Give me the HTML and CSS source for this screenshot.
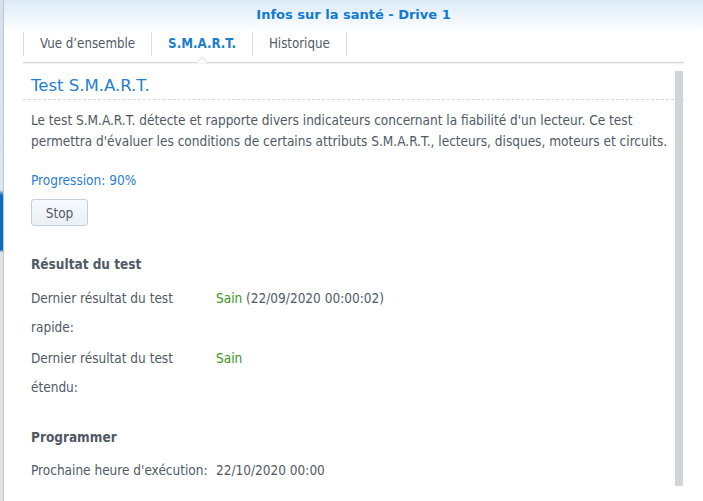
FILE: index.html
```html
<!DOCTYPE html>
<html lang="fr">
<head>
    <meta charset="UTF-8">
    <title>Infos sur la santé - Drive 1</title>
    <link rel="stylesheet" href="styles.css">
</head>
<body>
    <div class="desk-edge"></div>
    <div class="window">
        <div class="title-bar">Infos sur la santé - Drive 1</div>

        <!-- Tabs -->
        <div class="tab-bar">
            <div class="tab">Vue d’ensemble</div>
            <div class="tab active">S.M.A.R.T.</div>
            <div class="tab">Historique</div>
            <div class="tab tab-end"></div>
        </div>

        <div class="panel">
            <div class="scrollbar"></div>
            <h2 class="section-title">Test S.M.A.R.T.</h2>
            <div class="panel-body">
                <p class="desc">Le test S.M.A.R.T. détecte et rapporte divers indicateurs concernant la fiabilité d'un lecteur. Ce test permettra d'évaluer les conditions de certains attributs S.M.A.R.T., lecteurs, disques, moteurs et circuits.</p>
                <p class="progress">Progression: 90%</p>
                <button class="btn" type="button">Stop</button>

                <h3 class="group-title">Résultat du test</h3>
                <div class="field">
                    <div class="field-label">Dernier résultat du test rapide:</div>
                    <div class="field-value"><span class="ok">Sain</span> (22/09/2020 00:00:02)</div>
                </div>
                <div class="field">
                    <div class="field-label">Dernier résultat du test étendu:</div>
                    <div class="field-value"><span class="ok">Sain</span></div>
                </div>

                <h3 class="group-title schedule">Programmer</h3>
                <div class="field">
                    <div class="field-label">Prochaine heure d'exécution:</div>
                    <div class="field-value">22/10/2020 00:00</div>
                </div>
            </div>
        </div>
    </div>
</body>
</html>
```

FILE: styles.css
```css
body {
    margin: 0;
    display: flex;
    height: 501px;
    overflow: hidden;
    font-family: "DejaVu Sans Condensed", "DejaVu Sans", sans-serif;
    font-size: 13.5px;
    color: #4f5a65;
}

/* strip of the desktop behind the window */
.desk-edge {
    width: 3px;
    flex-shrink: 0;
    border-right: 1px solid #c3c7cc;
    background: linear-gradient(to bottom, #d4e0ec 0, #dfe6ee 190px, #0b6cc3 195px, #0b6cc3 250px, #e2e2e2 252px, #e2e2e2 100%);
}

.window {
    flex: 1;
    background-color: #ffffff;
}

.title-bar {
    height: 32px;
    line-height: 30px;
    text-align: center;
    font-family: "DejaVu Sans", sans-serif;
    font-size: 13px;
    font-weight: bold;
    color: #0f7bd2;
    background: linear-gradient(to bottom, #dbeaf8, #ffffff);
}

/* Tabs */
.tab-bar {
    display: flex;
    margin: 0 19px 0 19px;
    padding-bottom: 6px;
    border-bottom: 1px solid #d6dade;
    box-shadow: 0 1px 1px rgba(0, 0, 0, 0.05);
    position: relative;
}

.tab {
    height: 24px;
    line-height: 24px;
    padding: 0 16px;
    font-size: 13.2px;
    border-left: 1px solid #d7dde3;
    color: #4f5a65;
}

.tab.active {
    font-weight: bold;
    color: #1a7dd0;
    position: relative;
}

/* little notch under the active tab */
.tab.active::after {
    content: "";
    position: absolute;
    left: 50%;
    bottom: -7px;
    margin-left: -6px;
    width: 0;
    height: 0;
    border-left: 6px solid transparent;
    border-right: 6px solid transparent;
    border-bottom: 6px solid #d6dade;
}

.tab.active::before {
    content: "";
    position: absolute;
    left: 50%;
    bottom: -7px;
    margin-left: -5px;
    width: 0;
    height: 0;
    border-left: 5px solid transparent;
    border-right: 5px solid transparent;
    border-bottom: 5px solid #ffffff;
    z-index: 1;
}

.tab-end {
    padding: 0;
}

/* Panel */
.panel {
    position: relative;
    margin: 0 19px 0 19px;
    padding-top: 12px;
}

.scrollbar {
    position: absolute;
    top: 8px;
    right: 1px;
    width: 8px;
    height: 415px;
    background-color: #d3d4d7;
    z-index: 2;
}

.section-title {
    margin: 0;
    padding: 1px 8px 3px 8px;
    line-height: 20px;
    font-family: "DejaVu Sans", sans-serif;
    font-size: 16.5px;
    font-weight: normal;
    color: #1f7fce;
    border-bottom: 1px dashed #d4d8dc;
}

.panel-body {
    padding: 0 8px;
}

.desc {
    margin: 10px 0 0 0;
    line-height: 21px;
}

.progress {
    margin: 18px 0 0 0;
    line-height: 21px;
    color: #2a80d2;
}

.btn {
    display: block;
    margin-top: 8px;
    width: 57px;
    height: 27px;
    padding: 0;
    font-family: inherit;
    font-size: 13.5px;
    color: #4f5a65;
    border: 1px solid #c5cfda;
    border-radius: 3px;
    background: linear-gradient(to bottom, #f7fafd, #ebf0f5);
}

.group-title {
    margin: 28px 0 0 0;
    line-height: 21px;
    font-size: 13.5px;
    font-weight: bold;
    color: #4f5a65;
}

.group-title.schedule {
    margin-top: 25px;
}

.field {
    display: flex;
    margin-top: 9px;
    line-height: 29px;
}

.field + .field {
    margin-top: 2px;
}

.group-title.schedule + .field {
    margin-top: 8px;
}

.field-label {
    width: 185px;
    flex-shrink: 0;
    padding-right: 5px;
    box-sizing: border-box;
}

.ok {
    color: #3a9420;
}
```
